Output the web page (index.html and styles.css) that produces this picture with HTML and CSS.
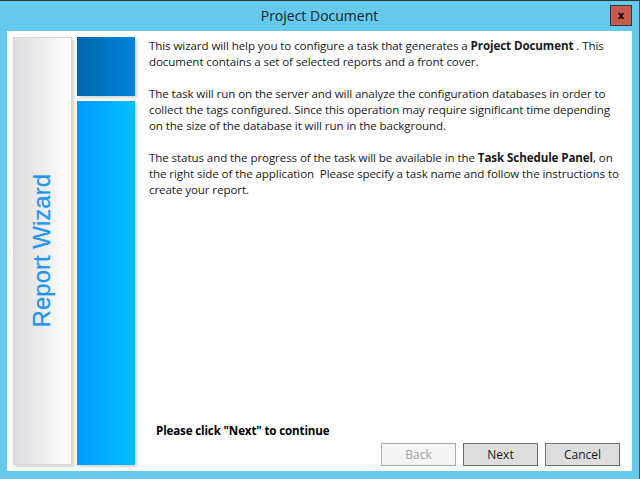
FILE: index.html
```html
<!DOCTYPE html>
<html lang="en">
<head>
    <meta charset="UTF-8">
    <title>Project Document</title>
    <link rel="stylesheet" href="styles.css">
</head>
<body>
    <div class="window">
        <div class="titlebar">
            <span class="title">Project Document</span>
            <button class="close">x</button>
        </div>
        <div class="client">
            <div class="side">
                <div class="side-label">
                    <span>Report Wizard</span>
                </div>
                <div class="side-blue">
                    <div class="blue-top"></div>
                    <div class="blue-bottom"></div>
                </div>
            </div>
            <div class="content">
                <div class="intro">
                    <p>This wizard will help you to configure a task that generates a <b>Project Document</b> . This document contains a set of selected reports and a front cover.</p>
                    <p>The task will run on the server and will analyze the configuration databases in order to collect the tags configured. Since this operation may require significant time depending on the size of the database it will run in the background.</p>
                    <p>The status and the progress of the task will be available in the <b>Task Schedule Panel</b>, on the right side of the application&nbsp; Please specify a task name and follow the instructions to create your report.</p>
                </div>
                <div class="footer">
                    <p class="hint">Please click "Next" to continue</p>
                    <div class="buttons">
                        <button class="btn" disabled>Back</button>
                        <button class="btn">Next</button>
                        <button class="btn">Cancel</button>
                    </div>
                </div>
            </div>
        </div>
    </div>
</body>
</html>
```

FILE: styles.css
```css
body {
    margin: 0;
    padding: 0;
    font-family: "Open Sans", "Noto Sans", sans-serif;
    color: #1a1a1a;
}
.window {
    width: 639px;
    height: 478px;
    background-color: #64c9ea;
    border-top: 1px solid #2e3538;
    border-right: 1px solid #4a5256;
    display: flex;
    flex-direction: column;
}
.titlebar {
    height: 30px;
    position: relative;
    display: flex;
    align-items: center;
    justify-content: center;
}
.title {
    font-size: 14px;
    color: #16232a;
    margin-top: -1px;
}
.close {
    position: absolute;
    top: 4px;
    left: 610px;
    width: 22px;
    height: 21px;
    padding: 0;
    background-color: #c65b50;
    border: 1px solid #3e3331;
    font-family: "DejaVu Sans", sans-serif;
    font-weight: bold;
    font-size: 10px;
    color: #000;
}
.client {
    margin: 0 7px 8px 7px;
    flex: 1;
    background-color: #fff;
    display: flex;
    padding: 6px;
}
.side {
    display: flex;
    gap: 5px;
}
.side-label {
    width: 57px;
    border: 1px solid #d6d6d6;
    background: linear-gradient(to right, #dcdcdc, #ffffff);
    box-shadow: 2px 2px 3px rgba(0, 0, 0, 0.18);
    display: flex;
    align-items: center;
    justify-content: center;
}
.side-label span {
    writing-mode: vertical-rl;
    transform: rotate(180deg);
    font-family: "Liberation Sans", Arial, sans-serif;
    font-size: 24px;
    color: #2296ee;
    text-shadow: 0 0 1px rgba(34, 150, 238, 0.5);
    margin-left: -2px;
}
.side-blue {
    width: 58px;
    display: flex;
    flex-direction: column;
    gap: 5px;
}
.blue-top {
    height: 59px;
    background: linear-gradient(to right, #0066ac, #0083da);
    box-shadow: 2px 2px 3px rgba(0, 0, 0, 0.18);
}
.blue-bottom {
    flex: 1;
    background: linear-gradient(to right, #009aff, #00bfff);
    box-shadow: 2px 2px 3px rgba(0, 0, 0, 0.18);
}
.content {
    flex: 1;
    display: flex;
    flex-direction: column;
    justify-content: space-between;
    padding-left: 14px;
    padding-right: 6px;
}
.intro p {
    margin: 1px 0 16px 0;
    font-size: 11.6px;
    line-height: 16px;
    letter-spacing: -0.1px;
}
.footer {
    display: flex;
    flex-direction: column;
}
.hint {
    margin: 0 0 5px 7px;
    font-size: 11.6px;
    font-weight: bold;
    letter-spacing: -0.15px;
    color: #000;
}
.buttons {
    display: flex;
    justify-content: flex-end;
    gap: 7px;
    margin-bottom: -1px;
}
.btn {
    width: 75px;
    height: 23px;
    padding: 0;
    background-color: #dddddd;
    border: 1px solid #707070;
    font-family: "Open Sans", "Noto Sans", sans-serif;
    font-size: 12px;
    color: #1a1a1a;
}
.btn:disabled {
    background-color: #f4f4f4;
    border-color: #adadad;
    color: #a3a3a3;
}
```
